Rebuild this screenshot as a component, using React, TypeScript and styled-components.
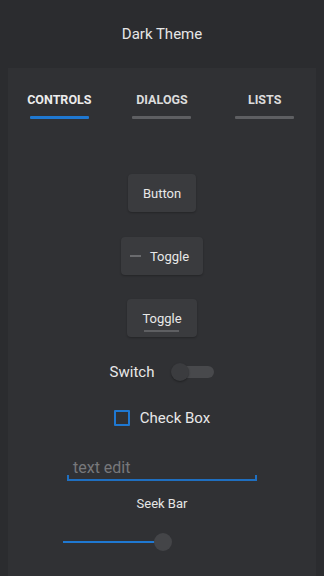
import styled, { createGlobalStyle } from "styled-components";

const GlobalStyle = createGlobalStyle`
  html, body {
    margin: 0;
    padding: 0;
    background: #2b2c2f;
    font-family: Roboto, "Liberation Sans", sans-serif;
    color: #e3e3e3;
  }
`;

const Screen = styled.div`
  width: 324px;
  height: 576px;
  overflow: hidden;
  background: #2b2c2f;
  display: flex;
  flex-direction: column;
`;

const Title = styled.div`
  height: 68px;
  flex-shrink: 0;
  box-sizing: border-box;
  padding-top: 25px;
  text-align: center;
  font-size: 15px;
  color: #e6e6e6;
`;

const Panel = styled.div`
  margin: 0 8px;
  flex: 1;
  background: #303134;
  display: flex;
  flex-direction: column;
  align-items: center;
`;

const Tabs = styled.div`
  width: 100%;
  display: grid;
  grid-template-columns: repeat(3, 1fr);
  padding-top: 24px;
`;

const Tab = styled.div<{ active?: boolean }>`
  display: flex;
  flex-direction: column;
  align-items: center;
  font-size: 12.5px;
  font-weight: 700;
  color: ${(p) => (p.active ? "#ececec" : "#dcdcdc")};

  &::after {
    content: "";
    display: block;
    width: 59px;
    height: 3px;
    margin-top: 9px;
    border-radius: 1px;
    background: ${(p) => (p.active ? "#1f78d1" : "#5e5f62")};
  }
`;

const Controls = styled.div`
  display: flex;
  flex-direction: column;
  align-items: center;
  padding-top: 55px;
  width: 100%;
`;

const Btn = styled.div<{ gapAfter: number; pad?: string }>`
  box-sizing: border-box;
  height: 38px;
  padding: ${(p) => p.pad || "0 15px"};
  border-radius: 4px;
  background: #3a3b3e;
  display: flex;
  align-items: center;
  justify-content: center;
  gap: 9px;
  font-size: 13px;
  color: #e8e8e8;
  margin-bottom: ${(p) => p.gapAfter}px;
  box-shadow: 0 1px 2px rgba(0, 0, 0, 0.25);
`;

const Dash = styled.span`
  width: 11px;
  height: 2px;
  background: #6a6b6e;
`;

const Underlined = styled.span`
  position: relative;
  &::after {
    content: "";
    position: absolute;
    left: 2px;
    right: 3px;
    bottom: -6px;
    height: 2px;
    background: #5e5f62;
  }
`;

const Row = styled.label<{ gap: number; gapAfter: number }>`
  display: flex;
  align-items: center;
  gap: ${(p) => p.gap}px;
  font-size: 15px;
  color: #e8e8e8;
  margin-bottom: ${(p) => p.gapAfter}px;
`;

const Track = styled.div`
  position: relative;
  width: 42px;
  height: 12px;
  border-radius: 6px;
  background: #48494c;
`;

const Thumb = styled.div`
  position: absolute;
  left: -1px;
  top: -3px;
  width: 18px;
  height: 18px;
  border-radius: 50%;
  background: #3b3c3f;
  box-shadow: 0 1px 2px rgba(0, 0, 0, 0.35);
`;

const Box = styled.span`
  width: 16px;
  height: 16px;
  box-sizing: border-box;
  border: 2px solid #1f78d1;
  border-radius: 1px;
`;

const Edit = styled.div`
  width: 190px;
  box-sizing: border-box;
  padding: 0 6px 2px;
  font-size: 16px;
  color: #77787b;
  border-bottom: 2px solid #1f6fc0;
  position: relative;
  &::before,
  &::after {
    content: "";
    position: absolute;
    bottom: 0;
    width: 2px;
    height: 4px;
    background: #1f6fc0;
  }
  &::before {
    left: 0;
  }
  &::after {
    right: 0;
  }
`;

const Caption = styled.div`
  font-size: 13px;
  color: #e6e6e6;
  margin-top: 15px;
`;

const Seek = styled.div`
  width: 200px;
  height: 20px;
  margin-top: 21px;
  display: flex;
  align-items: center;
  align-self: flex-start;
  margin-left: 55px;
`;

const SeekFill = styled.div`
  height: 2px;
  background: #1f78d1;
`;

const SeekThumb = styled.div`
  width: 18px;
  height: 18px;
  border-radius: 50%;
  background: #444548;
  margin-left: -2px;
`;

export default function App() {
  return (
    <Screen>
      <GlobalStyle />
      <Title>Dark Theme</Title>
      <Panel>
        <Tabs>
          <Tab active>CONTROLS</Tab>
          <Tab>DIALOGS</Tab>
          <Tab>LISTS</Tab>
        </Tabs>
        <Controls>
          <Btn gapAfter={25}>Button</Btn>
          <Btn gapAfter={24} pad="0 14px 0 9px">
            <Dash />
            Toggle
          </Btn>
          <Btn gapAfter={26}>
            <Underlined>Toggle</Underlined>
          </Btn>
          <Row gap={18} gapAfter={28}>
            Switch
            <Track>
              <Thumb />
            </Track>
          </Row>
          <Row gap={10} gapAfter={31}>
            <Box />
            Check Box
          </Row>
          <Edit>text edit</Edit>
          <Caption>Seek Bar</Caption>
          <Seek>
            <SeekFill style={{ width: 93 }} />
            <SeekThumb />
          </Seek>
        </Controls>
      </Panel>
    </Screen>
  );
}
